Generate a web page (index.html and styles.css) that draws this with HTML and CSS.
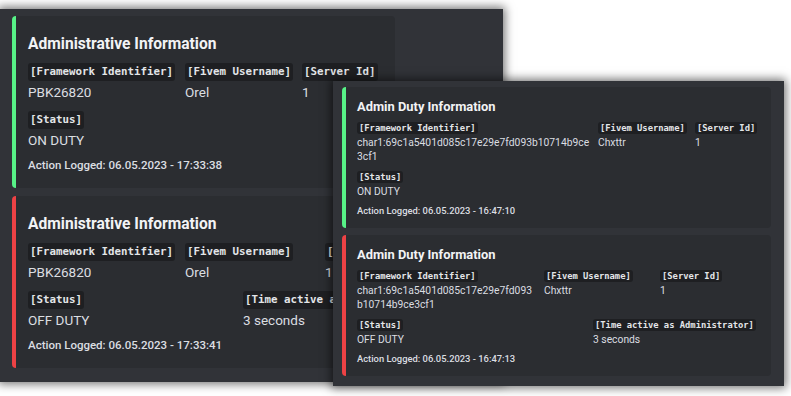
FILE: index.html
```html
<html>
	<head>
		<title>Admin duty logs</title>
		<link rel="stylesheet" href="styles.css">
	</head>
	<body>
		<div class="shot shot-back">
			<div class="embed embed-on">
				<div class="embed-title">Administrative Information</div>
				<div class="fields cols-b1">
					<div class="field">
						<div class="field-name"><code>[Framework Identifier]</code></div>
						<div class="field-value">PBK26820</div>
					</div>
					<div class="field">
						<div class="field-name"><code>[Fivem Username]</code></div>
						<div class="field-value">Orel</div>
					</div>
					<div class="field">
						<div class="field-name"><code>[Server Id]</code></div>
						<div class="field-value">1</div>
					</div>
				</div>
				<div class="fields">
					<div class="field">
						<div class="field-name"><code>[Status]</code></div>
						<div class="field-value">ON DUTY</div>
					</div>
				</div>
				<div class="embed-footer">Action Logged: 06.05.2023 - 17:33:38</div>
			</div>

			<!-- right part of this one sits under the second screenshot -->
			<div class="embed embed-off">
				<div class="embed-title">Administrative Information</div>
				<div class="fields cols-b2">
					<div class="field">
						<div class="field-name"><code>[Framework Identifier]</code></div>
						<div class="field-value">PBK26820</div>
					</div>
					<div class="field">
						<div class="field-name"><code>[Fivem Username]</code></div>
						<div class="field-value">Orel</div>
					</div>
					<div class="field">
						<div class="field-name"><code>[Server Id]</code></div>
						<div class="field-value">1</div>
					</div>
				</div>
				<div class="fields cols-b2-status">
					<div class="field">
						<div class="field-name"><code>[Status]</code></div>
						<div class="field-value">OFF DUTY</div>
					</div>
					<div class="field">
						<div class="field-name"><code>[Time active as Administrator]</code></div>
						<div class="field-value">3 seconds</div>
					</div>
				</div>
				<div class="embed-footer">Action Logged: 06.05.2023 - 17:33:41</div>
			</div>
		</div>

		<div class="shot shot-front">
			<div class="embed embed-on">
				<div class="embed-title">Admin Duty Information</div>
				<div class="fields cols-f1">
					<div class="field">
						<div class="field-name"><code>[Framework Identifier]</code></div>
						<div class="field-value">char1:69c1a5401d085c17e29e7fd093b10714b9ce<br>3cf1</div>
					</div>
					<div class="field">
						<div class="field-name"><code>[Fivem Username]</code></div>
						<div class="field-value">Chxttr</div>
					</div>
					<div class="field">
						<div class="field-name"><code>[Server Id]</code></div>
						<div class="field-value">1</div>
					</div>
				</div>
				<div class="fields">
					<div class="field">
						<div class="field-name"><code>[Status]</code></div>
						<div class="field-value">ON DUTY</div>
					</div>
				</div>
				<div class="embed-footer">Action Logged: 06.05.2023 - 16:47:10</div>
			</div>

			<div class="embed embed-off">
				<div class="embed-title">Admin Duty Information</div>
				<div class="fields cols-f2">
					<div class="field">
						<div class="field-name"><code>[Framework Identifier]</code></div>
						<div class="field-value">char1:69c1a5401d085c17e29e7fd093<br>b10714b9ce3cf1</div>
					</div>
					<div class="field">
						<div class="field-name"><code>[Fivem Username]</code></div>
						<div class="field-value">Chxttr</div>
					</div>
					<div class="field">
						<div class="field-name"><code>[Server Id]</code></div>
						<div class="field-value">1</div>
					</div>
				</div>
				<div class="fields cols-f2-status">
					<div class="field">
						<div class="field-name"><code>[Status]</code></div>
						<div class="field-value">OFF DUTY</div>
					</div>
					<div class="field">
						<div class="field-name"><code>[Time active as Administrator]</code></div>
						<div class="field-value">3 seconds</div>
					</div>
				</div>
				<div class="embed-footer">Action Logged: 06.05.2023 - 16:47:13</div>
			</div>
		</div>
	</body>
</html>
```

FILE: styles.css
```css
body {
	margin: 0;
	width: 791px;
	height: 396px;
	overflow: hidden;
	position: relative;
	background-color: #fff;
	font-family: Roboto, "Noto Sans", sans-serif;
}

/* the two pasted screenshots */
.shot {
	background-color: #313338;
	box-shadow: 0 0 9px 2px rgba(0, 0, 0, 0.55);
	box-sizing: border-box;
	overflow: hidden;
}

.shot-back {
	width: 503px;
	height: 373px;
	margin-top: 9px;
	padding: 7px 0 0 12px;
}

.shot-front {
	position: absolute;
	left: 333px;
	top: 81px;
	width: 451px;
	height: 305px;
	padding: 6px 0 0 9px;
}

/* embeds */
.embed {
	background-color: #2b2d31;
	border-left: 4px solid #57f287;
	border-radius: 4px;
	box-sizing: border-box;
	white-space: nowrap;
}

.embed-on { border-left-color: #57f287; }
.embed-off { border-left-color: #ed4245; }

.embed-title {
	color: #f2f3f5;
	font-weight: 700;
}

.field-name code {
	display: inline-block;
	background-color: #1e1f22;
	color: #e3e5e8;
	font-family: "DejaVu Sans Mono", monospace;
	font-weight: bold;
	border-radius: 3px;
}

.field-value {
	color: #dbdee1;
}

.embed-footer {
	color: #dbdee1;
	font-weight: 500;
}

.fields {
	display: grid;
	grid-template-columns: 1fr;
}

.cols-b1 { grid-template-columns: 157px 117px 1fr; }
.cols-b2 { grid-template-columns: 157px 140px 1fr; }
.cols-b2-status { grid-template-columns: 215px 1fr; }
.cols-f1 { grid-template-columns: 241px 97px 1fr; }
.cols-f2 { grid-template-columns: 187px 116px 1fr; }
.cols-f2-status { grid-template-columns: 236px 1fr; }

/* back screenshot: full size */
.shot-back .embed {
	width: 383px;
	padding: 9px 16px 15px 12px;
	margin-bottom: 8px;
}

.shot-back .embed-title {
	font-size: 15.6px;
	line-height: 22px;
	margin-top: 8px;
}

.shot-back .fields {
	margin-top: 8px;
}

.shot-back .fields + .fields {
	margin-top: 10px;
}

.shot-back .field-name code {
	font-size: 10.8px;
	height: 18px;
	line-height: 18px;
	padding: 0 2px;
}

.shot-back .field-value {
	font-size: 13.5px;
	line-height: 18px;
	margin-top: 2px;
}

.shot-back .embed-footer {
	font-size: 11.5px;
	line-height: 16px;
	margin-top: 8px;
}

/* front screenshot: scaled down */
.shot-front .embed {
	width: 429px;
	padding: 11px 12px 10px 11px;
	margin-bottom: 7px;
}

.shot-front .embed-title {
	font-size: 12.9px;
	line-height: 17px;
}

.shot-front .fields {
	margin-top: 7px;
}

.shot-front .fields + .fields {
	margin-top: 7px;
}

.shot-front .field-name code {
	font-size: 8.8px;
	height: 12px;
	line-height: 12px;
	padding: 0 2px;
}

.shot-front .field-value {
	font-size: 10.3px;
	line-height: 14px;
	margin-top: 2px;
}

.shot-front .embed-footer {
	font-size: 9.4px;
	line-height: 14px;
	margin-top: 5px;
}
```
